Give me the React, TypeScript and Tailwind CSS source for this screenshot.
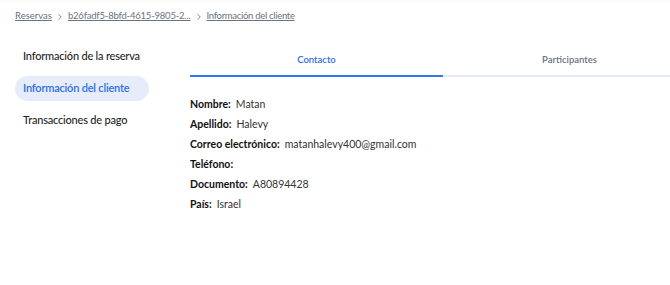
import React, { useState } from 'react';
import { ChevronRight } from 'lucide-react';

const sections = ['Información de la reserva', 'Información del cliente', 'Transacciones de pago'];

const contact: [string, string][] = [
  ['Nombre:', 'Matan'],
  ['Apellido:', 'Halevy'],
  ['Correo electrónico:', 'matanhalevy400@gmail.com'],
  ['Teléfono:', ''],
  ['Documento:', 'A80894428'],
  ['País:', 'Israel'],
];

export default function App() {
  const [active, setActive] = useState(1);
  const [tab, setTab] = useState(0);

  return (
    <div className="w-[670px] h-[285px] overflow-hidden bg-white font-['Lato',sans-serif] text-[#1a1a1a]">
      {/* breadcrumb */}
      <div className="flex items-center gap-[3px] px-[15px] h-[33px] text-[9.5px] text-[#6b7280] shadow-[inset_0_4px_4px_-4px_rgba(0,0,0,0.06)]">
        <a className="underline">Reservas</a>
        <ChevronRight className="w-2.5 h-2.5" />
        <a className="underline tracking-[-0.2px]">b26fadf5-8bfd-4615-9805-2...</a>
        <ChevronRight className="w-2.5 h-2.5" />
        <a className="underline tracking-[-0.3px]">Información del cliente</a>
      </div>

      <div className="flex mt-[10px]">
        {/* sidebar */}
        <div className="w-[190px] shrink-0 pl-[15px] pt-[1px] flex flex-col gap-[7px]">
          {sections.map((s, i) => (
            <button
              key={s}
              onClick={() => setActive(i)}
              className={`w-[134px] h-[25px] px-2 rounded-full text-left text-[11px] tracking-[-0.2px] whitespace-nowrap ${
                active === i ? 'bg-[#e6ecf9] text-[#2f6fe4] font-semibold' : 'text-[#1f1f1f] font-medium'
              }`}
            >
              {s}
            </button>
          ))}
        </div>

        {/* content */}
        <div className="flex-1 min-w-0 overflow-hidden">
          <div className="flex w-[506px] pt-[2px]">
            {['Contacto', 'Participantes'].map((t, i) => (
              <button
                key={t}
                onClick={() => setTab(i)}
                className={`w-[253px] h-[32px] text-[9.5px] border-b-2 ${
                  tab === i ? 'border-[#2f78f0] text-[#2f6fe4] font-semibold' : 'border-[#e3ebfa] text-[#6b7280] font-semibold'
                }`}
              >
                {t}
              </button>
            ))}
          </div>

          <div className="flex flex-col gap-[6px] mt-[21px] text-[10.5px]">
            {contact.map(([k, v]) => (
              <div key={k} className="flex gap-[5px] h-[14px] items-center">
                <span className="font-bold text-[#111]">{k}</span>
                <span className="text-[#333]">{v}</span>
              </div>
            ))}
          </div>
        </div>
      </div>
    </div>
  );
}
